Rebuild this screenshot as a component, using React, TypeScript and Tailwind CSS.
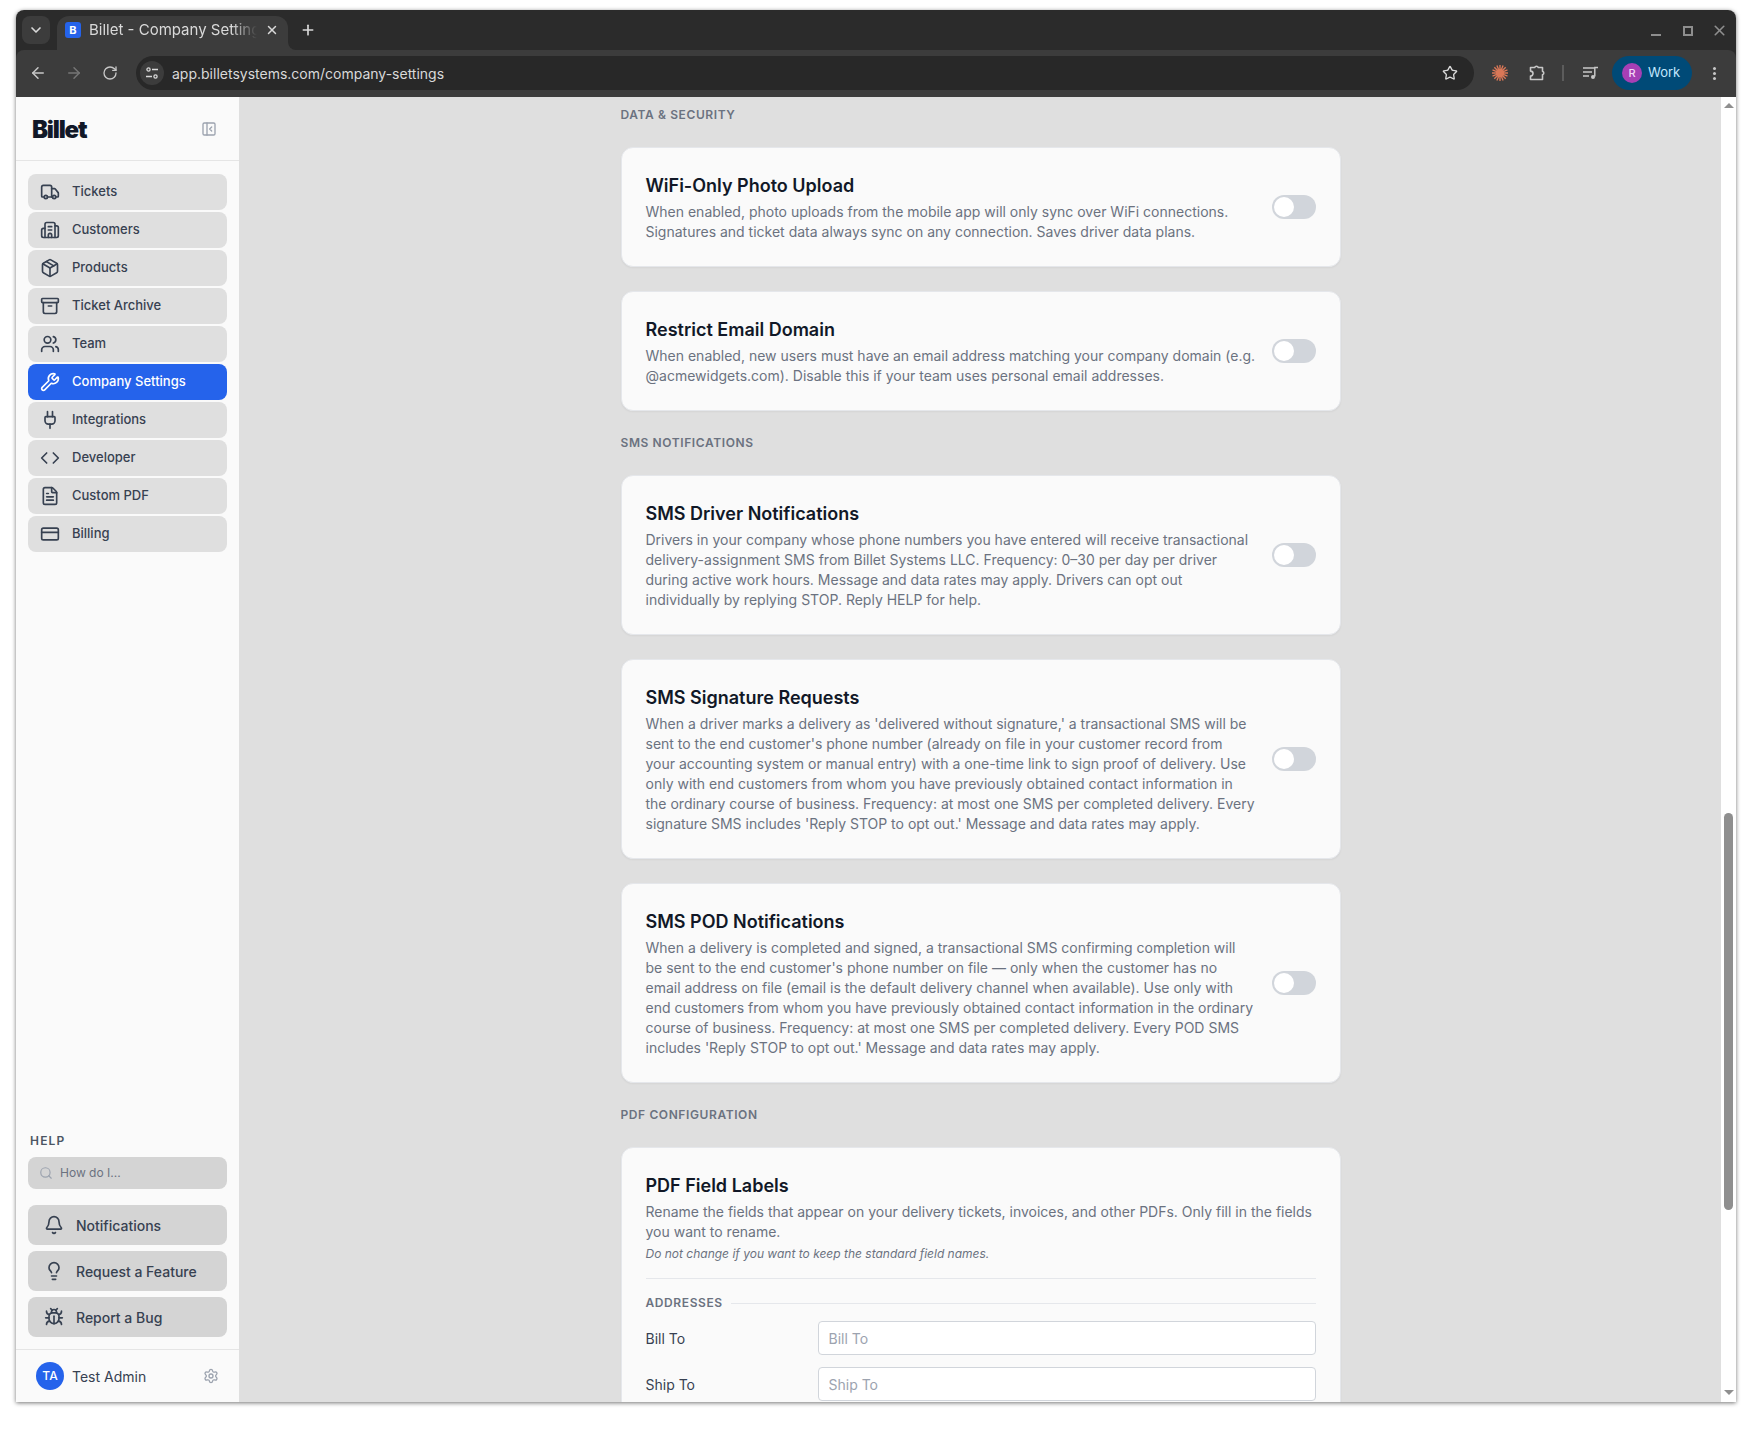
import {
  Archive,
  ArrowLeft,
  ArrowRight,
  Bell,
  Bug,
  Building2,
  ChevronDown,
  Code,
  CreditCard,
  FileText,
  Lightbulb,
  Package,
  PanelLeftClose,
  Plug,
  Plus,
  RotateCw,
  Search,
  Settings,
  Star,
  Truck,
  Users,
  Wrench,
  X,
} from 'lucide-react'

const navItems = [
  { label: 'Tickets', icon: Truck },
  { label: 'Customers', icon: Building2 },
  { label: 'Products', icon: Package },
  { label: 'Ticket Archive', icon: Archive },
  { label: 'Team', icon: Users },
  { label: 'Company Settings', icon: Wrench, active: true },
  { label: 'Integrations', icon: Plug },
  { label: 'Developer', icon: Code },
  { label: 'Custom PDF', icon: FileText },
  { label: 'Billing', icon: CreditCard },
]

const helpItems = [
  { label: 'Notifications', icon: Bell },
  { label: 'Request a Feature', icon: Lightbulb },
  { label: 'Report a Bug', icon: Bug },
]

function BrowserChrome() {
  return (
    <div className="shrink-0 bg-[#2b2b2b] font-['Inter',sans-serif]">
      <div className="flex h-10 items-start pl-1.5 pt-1.5">
        <div className="flex h-7 w-7 items-center justify-center rounded-lg bg-[#3c3c3c] text-[#d9d9d9]">
          <ChevronDown size={16} strokeWidth={2.5} />
        </div>
        <div className="relative ml-[7px] flex h-[34px] w-[231px] items-center rounded-t-xl bg-[#3c3c3c] pb-1.5 pl-2">
          <div className="flex h-4 w-4 items-center justify-center rounded-[3px] bg-[#2563eb] text-[11px] font-bold text-white">B</div>
          <span className="ml-2 w-[168px] overflow-hidden whitespace-nowrap text-[15px] text-[#d9d9d9] [mask-image:linear-gradient(to_right,black_85%,transparent)]">
            Billet - Company Settings
          </span>
          <X size={14} strokeWidth={2.5} className="ml-2 text-[#d9d9d9]" />
          <div className="absolute -right-2 bottom-0 h-2 w-2 bg-[#3c3c3c]">
            <div className="h-2 w-2 rounded-bl-lg bg-[#2b2b2b]" />
          </div>
        </div>
        <Plus size={16} strokeWidth={2.5} className="ml-3 mt-1.5 text-[#d9d9d9]" />
        <div className="ml-auto mr-2 mt-[6px] flex items-center text-[#8e8e8e]">
          <div className="mt-2 h-0.5 w-[10px] bg-[#8e8e8e]" />
          <div className="ml-[22px] h-[10px] w-[10px] border-2 border-[#8e8e8e]" />
          <X size={17} strokeWidth={2.25} className="ml-[18px]" />
        </div>
      </div>
      <div className="flex h-[47px] items-center rounded-t-lg bg-[#3c3c3c] pb-px pl-[13px] pr-3">
        <ArrowLeft size={18} className="text-[#c7c7c7]" />
        <ArrowRight size={18} className="ml-[18px] text-[#757575]" />
        <RotateCw size={16} className="ml-[19px] text-[#c7c7c7]" />
        <div className="ml-[18px] flex h-[34px] w-[1338px] items-center rounded-full bg-[#282828] pl-1 pr-4">
          <div className="flex h-6 w-6 items-center justify-center rounded-full bg-[#3c3c3c]">
            <svg width="14" height="14" viewBox="0 0 14 14" fill="none" stroke="#d9d9d9" strokeWidth="1.3">
              <circle cx="3.5" cy="3.5" r="1.6" />
              <path d="M7 3.5h6M1 10.5h6" />
              <circle cx="10.5" cy="10.5" r="1.6" />
            </svg>
          </div>
          <span className="ml-2 text-[14px] text-[#d9d9d9]">app.billetsystems.com/company-settings</span>
          <Star size={16} strokeWidth={2} className="ml-auto text-[#d9d9d9]" />
        </div>
        <svg className="ml-[17px]" width="18" height="18" viewBox="0 0 18 18" stroke="#d97757" strokeWidth="1.4">
          <path d="M9 1v16M1 9h16M3.3 3.3l11.4 11.4M14.7 3.3L3.3 14.7M5.9 1.5l6.2 15M12.1 1.5l-6.2 15M1.5 5.9l15 6.2M1.5 12.1l15-6.2" />
          <circle cx="9" cy="9" r="4" fill="#d97757" stroke="none" />
        </svg>
        <svg className="ml-[19px]" width="18" height="18" viewBox="0 0 18 18" fill="none" stroke="#c7c7c7" strokeWidth="1.6" strokeLinejoin="round">
          <path d="M2.5 3.5h4.2a1.9 1.9 0 0 1 3.6 0h4.2v3.7a1.9 1.9 0 0 1 0 3.6v4.7H2.5v-3.4a2.5 2.5 0 0 0 0-5z" />
        </svg>
        <div className="ml-4 h-[16px] w-0.5 bg-[#5c5c5c]" />
        <svg className="ml-[19px]" width="16" height="14" viewBox="0 0 16 14" fill="none" stroke="#c7c7c7" strokeWidth="1.5">
          <path d="M0 2h11M0 6h9M0 10h6" />
          <path d="M11.8 10.5V1.5H15" />
          <circle cx="10" cy="11" r="2" fill="#c7c7c7" stroke="none" />
        </svg>
        <div className="ml-[13px] flex h-[34px] w-20 items-center rounded-full bg-[#004a77] pl-2.5">
          <div className="flex h-5 w-5 items-center justify-center rounded-full bg-[#a63fb5] text-[11px] font-medium text-[#f3d9f7]">R</div>
          <span className="ml-1.5 text-[13px] text-[#c2e7ff]">Work</span>
        </div>
        <div className="ml-[21px] flex flex-col gap-[2px]">
          <div className="h-[3px] w-[3px] rounded-full bg-[#c7c7c7]" />
          <div className="h-[3px] w-[3px] rounded-full bg-[#c7c7c7]" />
          <div className="h-[3px] w-[3px] rounded-full bg-[#c7c7c7]" />
        </div>
      </div>
    </div>
  )
}

function Sidebar() {
  return (
    <aside className="flex w-[223px] shrink-0 flex-col bg-[#fafafa]">
      <div className="flex h-[64px] items-center justify-between border-b border-[#e5e5e5] pl-4 pr-[22px]">
        <span className="pt-0.5 text-[24px] font-black tracking-tighter text-[#111827]">Billet</span>
        <PanelLeftClose size={16} className="text-[#9ca3af]" />
      </div>
      <nav className="flex flex-col gap-0.5 px-3 pt-[13px]">
        {navItems.map((item) => (
          <div
            key={item.label}
            className={`flex h-9 items-center rounded-lg pl-3 text-[13px] font-medium ${
              item.active ? 'bg-[#2563eb] text-white' : 'bg-[#dfdfdf] text-[#374151]'
            }`}
          >
            <item.icon size={20} strokeWidth={2} />
            <span className="ml-3">{item.label}</span>
          </div>
        ))}
      </nav>
      <div className="mt-auto px-3">
        <div className="px-0.5 text-[12px] font-semibold uppercase leading-4 tracking-widest text-[#4b5563]">Help</div>
        <div className="mt-2 flex h-8 items-center rounded-lg bg-[#d4d4d4] pl-[11px]">
          <Search size={14} className="text-[#9ca3af]" />
          <span className="ml-[7px] text-[12px] text-[#6b7280]">How do I...</span>
        </div>
        <div className="mt-4 flex flex-col gap-1.5">
          {helpItems.map((item) => (
            <div key={item.label} className="flex h-10 items-center rounded-lg bg-[#d4d4d4] pl-4 text-[14px] font-medium text-[#374151]">
              <item.icon size={20} strokeWidth={2} />
              <span className="ml-3">{item.label}</span>
            </div>
          ))}
        </div>
      </div>
      <div className="mt-3 flex h-[53px] items-center border-t border-[#e5e5e5] pl-5 pr-5">
        <div className="flex h-7 w-7 items-center justify-center rounded-full bg-[#2563eb] text-[12px] font-medium text-white">TA</div>
        <span className="ml-2 text-[14px] text-[#374151]">Test Admin</span>
        <Settings size={16} className="ml-auto text-[#9ca3af]" />
      </div>
    </aside>
  )
}

function SectionLabel({ children }: { children: string }) {
  return <div className="text-[12px] font-semibold uppercase leading-4 tracking-wider text-[#6b7280]">{children}</div>
}

function ToggleCard({ title, description }: { title: string; description: string }) {
  return (
    <div className="flex items-center gap-4 rounded-xl border border-[#e5e7eb] bg-[#fafafa] p-6 shadow-[0_1px_2px_rgba(0,0,0,0.05)]">
      <div className="flex-1">
        <h3 className="text-[18px] font-semibold leading-7 text-[#111827]">{title}</h3>
        <p className="mt-0.5 text-[14px] leading-5 text-[#6b7280]">{description}</p>
      </div>
      <div className="flex h-6 w-11 shrink-0 items-center rounded-full bg-[#d1d5db] px-0.5">
        <div className="h-5 w-5 rounded-full bg-white" />
      </div>
    </div>
  )
}

function Field({ label }: { label: string }) {
  return (
    <div className="flex items-center">
      <label className="w-[172px] text-[14px] text-[#374151]">{label}</label>
      <input
        placeholder={label}
        className="h-[34px] flex-1 rounded border border-[#d1d5db] bg-white px-2.5 text-[14px] placeholder:text-[#9ca3af]"
      />
    </div>
  )
}

function Scrollbar() {
  return (
    <div className="flex w-[15px] shrink-0 flex-col items-center bg-white">
      <div className="mt-1.5 h-0 w-0 border-x-[5px] border-b-[5px] border-x-transparent border-b-[#8f8f8f]" />
      <div className="mt-[705px] h-[397px] w-[9px] rounded-t-[5px] rounded-b-[5px] bg-[#8f8f8f]" />
      <div className="mt-auto mb-[7px] h-0 w-0 border-x-[5px] border-t-[5px] border-x-transparent border-t-[#8f8f8f]" />
    </div>
  )
}

export default function App() {
  return (
    <div className="h-[1434px] w-[1752px] overflow-hidden bg-white pl-4 pt-2.5 font-['Inter',sans-serif]">
      <div className="flex h-[1392px] w-[1720px] flex-col overflow-hidden rounded-t-lg shadow-[0_1px_4px_rgba(0,0,0,0.55)]">
        <BrowserChrome />
        <div className="flex min-h-0 flex-1">
          <Sidebar />
          <main className="min-w-0 flex-1 overflow-hidden bg-[#dfdfdf] pl-px">
            <div className="mx-auto flex w-[720px] flex-col gap-6 pt-2.5">
              <SectionLabel>Data &amp; Security</SectionLabel>
              <ToggleCard
                title="WiFi-Only Photo Upload"
                description="When enabled, photo uploads from the mobile app will only sync over WiFi connections. Signatures and ticket data always sync on any connection. Saves driver data plans."
              />
              <ToggleCard
                title="Restrict Email Domain"
                description="When enabled, new users must have an email address matching your company domain (e.g. @acmewidgets.com). Disable this if your team uses personal email addresses."
              />
              <SectionLabel>SMS Notifications</SectionLabel>
              <ToggleCard
                title="SMS Driver Notifications"
                description="Drivers in your company whose phone numbers you have entered will receive transactional delivery-assignment SMS from Billet Systems LLC. Frequency: 0–30 per day per driver during active work hours. Message and data rates may apply. Drivers can opt out individually by replying STOP. Reply HELP for help."
              />
              <ToggleCard
                title="SMS Signature Requests"
                description="When a driver marks a delivery as 'delivered without signature,' a transactional SMS will be sent to the end customer's phone number (already on file in your customer record from your accounting system or manual entry) with a one-time link to sign proof of delivery. Use only with end customers from whom you have previously obtained contact information in the ordinary course of business. Frequency: at most one SMS per completed delivery. Every signature SMS includes 'Reply STOP to opt out.' Message and data rates may apply."
              />
              <ToggleCard
                title="SMS POD Notifications"
                description="When a delivery is completed and signed, a transactional SMS confirming completion will be sent to the end customer's phone number on file — only when the customer has no email address on file (email is the default delivery channel when available). Use only with end customers from whom you have previously obtained contact information in the ordinary course of business. Frequency: at most one SMS per completed delivery. Every POD SMS includes 'Reply STOP to opt out.' Message and data rates may apply."
              />
              <SectionLabel>PDF Configuration</SectionLabel>
              <div className="rounded-xl border border-[#e5e7eb] bg-[#fafafa] p-6 shadow-[0_1px_2px_rgba(0,0,0,0.05)]">
                <h3 className="text-[18px] font-semibold leading-7 text-[#111827]">PDF Field Labels</h3>
                <p className="mt-0.5 text-[14px] leading-5 text-[#6b7280]">
                  Rename the fields that appear on your delivery tickets, invoices, and other PDFs. Only fill in the fields you want to rename.
                </p>
                <p className="mt-1 text-[12px] italic leading-4 text-[#6b7280]">Do not change if you want to keep the standard field names.</p>
                <div className="mt-4 border-t border-[#e5e7eb] pt-4">
                  <div className="flex items-center gap-2">
                    <span className="text-[12px] font-semibold uppercase leading-4 tracking-wider text-[#6b7280]">Addresses</span>
                    <div className="h-px flex-1 bg-[#e5e7eb]" />
                  </div>
                  <div className="mt-2.5 flex flex-col gap-3">
                    <Field label="Bill To" />
                    <Field label="Ship To" />
                  </div>
                </div>
              </div>
            </div>
          </main>
          <Scrollbar />
        </div>
      </div>
    </div>
  )
}
